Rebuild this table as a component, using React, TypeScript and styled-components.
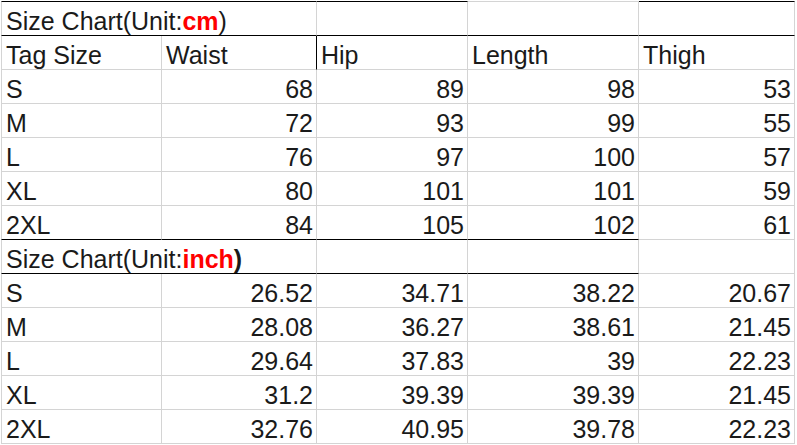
import React from "react";
import styled, { createGlobalStyle } from "styled-components";

const GRID = "#d4d4d4";
const DARK = "#000000";

const Global = createGlobalStyle`
  html, body { margin: 0; padding: 0; background: #ffffff; }
  body { font-family: "Liberation Sans", Arial, sans-serif; }
`;

const Sheet = styled.div`
  display: grid;
  grid-template-columns: 161px 155px 151px 171px 156px;
  grid-template-rows: 35px repeat(12, 34px);
  margin: 1px 0 0 1px;
  width: 794px;
`;

type CellProps = {
  $span?: number;
  $align?: "left" | "right";
  $first?: boolean;
  $topRow?: boolean;
  $top?: string;
  $bottom?: string;
  $right?: string;
  $left?: string;
};

const Cell = styled.div<CellProps>`
  box-sizing: border-box;
  grid-column: span ${(p) => p.$span ?? 1};
  display: flex;
  align-items: flex-end;
  justify-content: ${(p) => (p.$align === "right" ? "flex-end" : "flex-start")};
  padding: 0 3px 0 4px;
  font-size: 25px;
  line-height: 28px;
  color: #1a1a1a;
  white-space: nowrap;
  overflow: visible;
  border-right: 1px solid ${(p) => p.$right ?? GRID};
  border-bottom: 1px solid ${(p) => p.$bottom ?? GRID};
  border-top: ${(p) => (p.$topRow ? `1px solid ${p.$top ?? GRID}` : "none")};
  border-left: ${(p) => (p.$first ? `1px solid ${p.$left ?? GRID}` : "none")};
`;

const Unit = styled.span`
  color: #ff0000;
  font-weight: bold;
`;

const Paren = styled.span<{ $bold?: boolean }>`
  font-weight: ${(p) => (p.$bold ? "bold" : "normal")};
`;

const cmRows: string[][] = [
  ["S", "68", "89", "98", "53"],
  ["M", "72", "93", "99", "55"],
  ["L", "76", "97", "100", "57"],
  ["XL", "80", "101", "101", "59"],
  ["2XL", "84", "105", "102", "61"],
];

const inchRows: string[][] = [
  ["S", "26.52", "34.71", "38.22", "20.67"],
  ["M", "28.08", "36.27", "38.61", "21.45"],
  ["L", "29.64", "37.83", "39", "22.23"],
  ["XL", "31.2", "39.39", "39.39", "21.45"],
  ["2XL", "32.76", "40.95", "39.78", "22.23"],
];

const headers = ["Tag Size", "Waist", "Hip", "Length", "Thigh"];

function DataRow({ row, darkBottom }: { row: string[]; darkBottom?: boolean }) {
  return (
    <>
      {row.map((v, i) => (
        <Cell
          key={i}
          $first={i === 0}
          $align={i === 0 ? "left" : "right"}
          $bottom={darkBottom && i < 4 ? DARK : GRID}
        >
          {v}
        </Cell>
      ))}
    </>
  );
}

export default function App() {
  return (
    <>
      <Global />
      <Sheet>
        <Cell $span={2} $first $topRow $top={DARK} $bottom={DARK}>
          Size Chart(Unit:<Unit>cm</Unit>
          <Paren>)</Paren>
        </Cell>
        <Cell $topRow $top={DARK} $bottom={DARK} />
        <Cell $topRow $top={GRID} $bottom={DARK} />
        <Cell $topRow $top={DARK} $bottom={DARK} />

        {headers.map((h, i) => (
          <Cell key={h} $first={i === 0} $right={i === 1 ? DARK : GRID}>
            {h}
          </Cell>
        ))}

        {cmRows.map((r, i) => (
          <DataRow key={"cm" + i} row={r} darkBottom={i === cmRows.length - 1} />
        ))}

        <Cell $span={2} $first $bottom={DARK}>
          Size Chart(Unit:<Unit>inch</Unit>
          <Paren $bold>)</Paren>
        </Cell>
        <Cell $bottom={DARK} />
        <Cell $bottom={DARK} />
        <Cell />

        {inchRows.map((r, i) => (
          <DataRow key={"in" + i} row={r} />
        ))}
      </Sheet>
    </>
  );
}
